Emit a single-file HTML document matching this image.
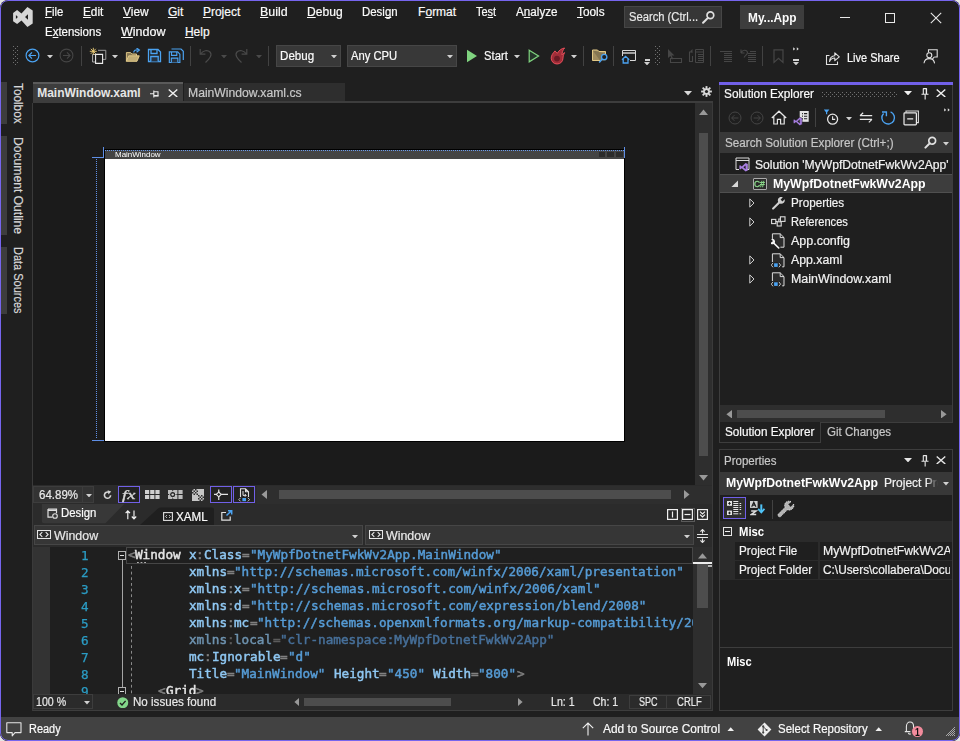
<!DOCTYPE html>
<html><head><meta charset="utf-8"><title>MyWpfDotnetFwkWv2App</title>
<style>
html,body{margin:0;padding:0;}
body{width:960px;height:741px;background:#e6e6e6;overflow:hidden;position:relative;font-family:'Liberation Sans',sans-serif;}
#win{position:absolute;left:0;top:0;width:960px;height:741px;box-sizing:border-box;background:#1f1f1f;border-radius:8px;overflow:hidden;}
#frame{position:absolute;left:0;top:0;width:960px;height:741px;box-sizing:border-box;border:1px solid #7665ee;border-radius:8px;pointer-events:none;}
.a{position:absolute;display:block;}
.t{position:absolute;white-space:pre;transform-origin:0 50%;}
u{text-decoration:underline;text-decoration-skip-ink:none;text-underline-offset:0.6px;text-decoration-thickness:1px;}
</style></head><body>
<div id="win">
<span class="t" style="left:44.90px;top:4.10px;font-size:12px;line-height:16px;color:#fafafa;font-family:'Liberation Sans',sans-serif;-webkit-text-stroke:0.2px;transform:scaleX(0.9460);"><u>F</u>ile</span>
<span class="t" style="left:82.90px;top:4.10px;font-size:12px;line-height:16px;color:#fafafa;font-family:'Liberation Sans',sans-serif;-webkit-text-stroke:0.2px;transform:scaleX(0.9813);"><u>E</u>dit</span>
<span class="t" style="left:122.60px;top:4.10px;font-size:12px;line-height:16px;color:#fafafa;font-family:'Liberation Sans',sans-serif;-webkit-text-stroke:0.2px;transform:scaleX(0.9924);"><u>V</u>iew</span>
<span class="t" style="left:167.90px;top:4.10px;font-size:12px;line-height:16px;color:#fafafa;font-family:'Liberation Sans',sans-serif;-webkit-text-stroke:0.2px;"><u>G</u>it</span>
<span class="t" style="left:202.90px;top:4.10px;font-size:12px;line-height:16px;color:#fafafa;font-family:'Liberation Sans',sans-serif;-webkit-text-stroke:0.2px;"><u>P</u>roject</span>
<span class="t" style="left:259.60px;top:4.10px;font-size:12px;line-height:16px;color:#fafafa;font-family:'Liberation Sans',sans-serif;-webkit-text-stroke:0.2px;transform:scaleX(1.0342);"><u>B</u>uild</span>
<span class="t" style="left:306.60px;top:4.10px;font-size:12px;line-height:16px;color:#fafafa;font-family:'Liberation Sans',sans-serif;-webkit-text-stroke:0.2px;transform:scaleX(1.0064);"><u>D</u>ebug</span>
<span class="t" style="left:362.10px;top:4.10px;font-size:12px;line-height:16px;color:#fafafa;font-family:'Liberation Sans',sans-serif;-webkit-text-stroke:0.2px;transform:scaleX(0.9529);">Desi<u>g</u>n</span>
<span class="t" style="left:418.10px;top:4.10px;font-size:12px;line-height:16px;color:#fafafa;font-family:'Liberation Sans',sans-serif;-webkit-text-stroke:0.2px;">F<u>o</u>rmat</span>
<span class="t" style="left:476.10px;top:4.10px;font-size:12px;line-height:16px;color:#fafafa;font-family:'Liberation Sans',sans-serif;-webkit-text-stroke:0.2px;transform:scaleX(0.9130);">Te<u>s</u>t</span>
<span class="t" style="left:515.60px;top:4.10px;font-size:12px;line-height:16px;color:#fafafa;font-family:'Liberation Sans',sans-serif;-webkit-text-stroke:0.2px;transform:scaleX(0.9742);">A<u>n</u>alyze</span>
<span class="t" style="left:576.60px;top:4.10px;font-size:12px;line-height:16px;color:#fafafa;font-family:'Liberation Sans',sans-serif;-webkit-text-stroke:0.2px;transform:scaleX(0.9852);"><u>T</u>ools</span>
<span class="t" style="left:45.10px;top:23.80px;font-size:12px;line-height:16px;color:#fafafa;font-family:'Liberation Sans',sans-serif;-webkit-text-stroke:0.2px;transform:scaleX(0.9557);">E<u>x</u>tensions</span>
<span class="t" style="left:120.60px;top:23.80px;font-size:12px;line-height:16px;color:#fafafa;font-family:'Liberation Sans',sans-serif;-webkit-text-stroke:0.2px;transform:scaleX(1.0448);"><u>W</u>indow</span>
<span class="t" style="left:184.90px;top:23.80px;font-size:12px;line-height:16px;color:#fafafa;font-family:'Liberation Sans',sans-serif;-webkit-text-stroke:0.2px;"><u>H</u>elp</span>
<svg class="a" style="left:13px;top:6px;" width="21" height="22" viewBox="0 0 21 22"><path d="M0.1 6.9 L4.1 3.9 L8.5 7.4 L14.4 0.9 L19.7 4.5 V17.4 L14.4 21.1 L8.5 14.6 L4.1 18.1 L0.1 15.2 Z M2.9 9 V13 L4.9 11 Z M15 8.2 V13.8 L12 11 Z" fill="#d6d6d6" fill-rule="evenodd"/></svg>
<div class="a" style="left:624px;top:6px;width:98px;height:22px;background:#363636;border:1px solid #464646;box-sizing:border-box;"></div>
<span class="t" style="left:629.10px;top:9.10px;font-size:12px;line-height:16px;color:#e8e8e8;font-family:'Liberation Sans',sans-serif;-webkit-text-stroke:0.2px;transform:scaleX(0.9336);">Search (Ctrl...</span>
<svg class="a" style="left:700.5px;top:9.5px;" width="15" height="15" viewBox="0 0 16 16"><circle cx="10" cy="5.6" r="3.6" fill="none" stroke="#e0e0e0" stroke-width="1.8"/><path d="M7.4 8.4 L2.2 13.6" stroke="#e0e0e0" stroke-width="2.2" stroke-linecap="round"/></svg>
<div class="a" style="left:740px;top:5px;width:64px;height:24px;background:#3d3d3d;"></div>
<span class="t" style="left:747.60px;top:9.80px;font-size:12px;line-height:16px;color:#fafafa;font-family:'Liberation Sans',sans-serif;font-weight:bold;transform:scaleX(0.9896);">My...App</span>
<div class="a" style="left:839.5px;top:17px;width:10.5px;height:1px;background:#e8e8e8;"></div>
<div class="a" style="left:885px;top:13px;width:10px;height:10px;border:1px solid #e8e8e8;box-sizing:border-box;"></div>
<svg class="a" style="left:930px;top:12px;" width="12" height="12" viewBox="0 0 12 12"><path d="M0.8 0.8 L11.2 11.2 M11.2 0.8 L0.8 11.2" stroke="#e8e8e8" stroke-width="1.1"/></svg>
<div class="a" style="left:13px;top:46px;width:5px;height:19px;background-image:radial-gradient(circle at 0.5px 0.5px,#707070 0.6px,transparent 0.75px),radial-gradient(circle at 0.5px 0.5px,#707070 0.6px,transparent 0.75px);background-size:4px 4px;background-position:0 0,2px 2px;"></div>
<div class="a" style="left:655px;top:46px;width:5px;height:19px;background-image:radial-gradient(circle at 0.5px 0.5px,#707070 0.6px,transparent 0.75px),radial-gradient(circle at 0.5px 0.5px,#707070 0.6px,transparent 0.75px);background-size:4px 4px;background-position:0 0,2px 2px;"></div>
<div class="a" style="left:81px;top:46px;width:1px;height:20px;background:#424242;"></div>
<div class="a" style="left:190px;top:46px;width:1px;height:20px;background:#424242;"></div>
<div class="a" style="left:268px;top:46px;width:1px;height:20px;background:#424242;"></div>
<div class="a" style="left:583px;top:46px;width:1px;height:20px;background:#424242;"></div>
<div class="a" style="left:613px;top:46px;width:1px;height:20px;background:#424242;"></div>
<div class="a" style="left:710px;top:46px;width:1px;height:20px;background:#424242;"></div>
<div class="a" style="left:762px;top:46px;width:1px;height:20px;background:#424242;"></div>
<svg class="a" style="left:25px;top:48px;" width="15" height="15" viewBox="0 0 15 15"><circle cx="7.5" cy="7.5" r="6.4" fill="none" stroke="#4ba3f2" stroke-width="1.2"/><path d="M11 7.5 H4.2 M7 4.4 L3.9 7.5 L7 10.6" fill="none" stroke="#4ba3f2" stroke-width="1.2"/></svg>
<svg class="a" style="left:47.2px;top:54.5px;" width="6" height="3.5" viewBox="0 0 6 3.5"><path d="M0 0 H6 L3 3.4 Z" fill="#d0d0d0"/></svg>
<svg class="a" style="left:59px;top:48px;" width="15" height="15" viewBox="0 0 15 15"><circle cx="7.5" cy="7.5" r="6.4" fill="none" stroke="#454545" stroke-width="1.1"/><path d="M4 7.5 H10.8 M8 4.4 L11.1 7.5 L8 10.6" fill="none" stroke="#454545" stroke-width="1.1"/></svg>
<svg class="a" style="left:89px;top:47px;" width="18" height="17" viewBox="0 0 18 17"><path d="M9 3.3 H16.8 V12.4 H14" fill="none" stroke="#9c9c9c" stroke-width="1"/><path d="M6.5 7.5 H3.6 V15 H6.5" fill="none" stroke="#b0b0b0" stroke-width="1"/><path d="M6.6 7.4 H13.6 V16.4 H6.6 Z" fill="#1f1f1f" stroke="#ececec" stroke-width="1.1"/><path d="M4.3 0.8 V7.8 M0.8 4.3 H7.8 M1.8 1.8 L6.8 6.8 M6.8 1.8 L1.8 6.8" stroke="#f2d27a" stroke-width="0.9"/></svg>
<svg class="a" style="left:112px;top:54.5px;" width="6" height="3.5" viewBox="0 0 6 3.5"><path d="M0 0 H6 L3 3.4 Z" fill="#d0d0d0"/></svg>
<svg class="a" style="left:124.5px;top:48px;" width="16" height="16" viewBox="0 0 16 16"><g transform="scale(0.92)"><path d="M1.5 5 H6 L7.5 6.5 H12.5 V8.5 H4 L1.5 14.5 Z" fill="#d9bd7c" opacity="0.55"/><path d="M1.5 14.5 V5 H6 L7.5 6.5 H12.5 V8.5" fill="none" stroke="#e8cf8c" stroke-width="1"/><path d="M1.5 14.5 L4 8.5 H15.5 L13 14.5 Z" fill="#e8cf8c" fill-opacity="0.8" stroke="#e8cf8c" stroke-width="1"/><path d="M9.5 5 C9.5 2.5 11.5 1.8 14 2" fill="none" stroke="#4ba3f2" stroke-width="1.3"/><path d="M12.5 0 L15.6 2.1 L12.6 4.6" fill="none" stroke="#4ba3f2" stroke-width="1.3"/></g></svg>
<svg class="a" style="left:146.6px;top:48.2px;" width="15" height="15" viewBox="0 0 15 15"><path d="M1.5 1.5 H11 L13.5 4 V13.5 H1.5 Z" fill="none" stroke="#4ba3f2" stroke-width="1.3"/><path d="M4 1.5 V5.5 H10 V1.5" fill="none" stroke="#4ba3f2" stroke-width="1.3"/><path d="M3.8 13.5 V8.5 H11.2 V13.5" fill="#27323f" stroke="#4ba3f2" stroke-width="1.3"/></svg>
<svg class="a" style="left:168px;top:48px;" width="16" height="16" viewBox="0 0 16 16"><path d="M3.5 1 H13 L15.3 3.3 V12" fill="none" stroke="#4ba3f2" stroke-width="1.2"/><g transform="translate(0,2.6) scale(0.88)"><path d="M1.5 1.5 H11 L13.5 4 V13.5 H1.5 Z" fill="none" stroke="#4ba3f2" stroke-width="1.3"/><path d="M4 1.5 V5.5 H10 V1.5" fill="none" stroke="#4ba3f2" stroke-width="1.3"/><path d="M3.8 13.5 V8.5 H11.2 V13.5" fill="#27323f" stroke="#4ba3f2" stroke-width="1.3"/></g></svg>
<svg class="a" style="left:199px;top:48px;" width="14" height="15" viewBox="0 0 14 15"><path d="M1.2 1 V6.2 H6.4" fill="none" stroke="#4a4a4a" stroke-width="1.2"/><path d="M1.6 6 C4 2.5 8.5 1.5 11 4 C13.5 6.8 11 10.5 6.5 14.5" fill="none" stroke="#4a4a4a" stroke-width="1.2"/></svg>
<svg class="a" style="left:221px;top:54.5px;" width="6" height="3.5" viewBox="0 0 6 3.5"><path d="M0 0 H6 L3 3.4 Z" fill="#4a4a4a"/></svg>
<svg class="a" style="left:234px;top:48px;" width="14" height="15" viewBox="0 0 14 15"><g transform="translate(14,0) scale(-1,1)"><path d="M1.2 1 V6.2 H6.4" fill="none" stroke="#4a4a4a" stroke-width="1.2"/><path d="M1.6 6 C4 2.5 8.5 1.5 11 4 C13.5 6.8 11 10.5 6.5 14.5" fill="none" stroke="#4a4a4a" stroke-width="1.2"/></g></svg>
<svg class="a" style="left:256px;top:54.5px;" width="6" height="3.5" viewBox="0 0 6 3.5"><path d="M0 0 H6 L3 3.4 Z" fill="#4a4a4a"/></svg>
<div class="a" style="left:276px;top:45px;width:65px;height:22px;background:#383838;border:1px solid #464646;box-sizing:border-box;"></div>
<span class="t" style="left:280.20px;top:48.30px;font-size:12px;line-height:16px;color:#fafafa;font-family:'Liberation Sans',sans-serif;-webkit-text-stroke:0.2px;transform:scaleX(0.9668);">Debug</span>
<svg class="a" style="left:331px;top:54.5px;" width="6" height="3.5" viewBox="0 0 6 3.5"><path d="M0 0 H6 L3 3.4 Z" fill="#d0d0d0"/></svg>
<div class="a" style="left:347px;top:45px;width:110px;height:22px;background:#383838;border:1px solid #464646;box-sizing:border-box;"></div>
<span class="t" style="left:351.20px;top:48.30px;font-size:12px;line-height:16px;color:#fafafa;font-family:'Liberation Sans',sans-serif;-webkit-text-stroke:0.2px;transform:scaleX(0.9360);">Any CPU</span>
<svg class="a" style="left:447.3px;top:54.5px;" width="6" height="3.5" viewBox="0 0 6 3.5"><path d="M0 0 H6 L3 3.4 Z" fill="#d0d0d0"/></svg>
<svg class="a" style="left:466px;top:49px;" width="12" height="14" viewBox="0 0 12 14"><path d="M1 0.8 L11 7 L1 13.2 Z" fill="#7fd37f"/></svg>
<span class="t" style="left:483.90px;top:48.30px;font-size:12px;line-height:16px;color:#fafafa;font-family:'Liberation Sans',sans-serif;-webkit-text-stroke:0.2px;transform:scaleX(0.9391);">Start</span>
<svg class="a" style="left:514px;top:54.5px;" width="6" height="3.5" viewBox="0 0 6 3.5"><path d="M0 0 H6 L3 3.4 Z" fill="#d0d0d0"/></svg>
<svg class="a" style="left:528px;top:49px;" width="12" height="14" viewBox="0 0 12 14"><path d="M1.2 1.2 L10.6 7 L1.2 12.8 Z" fill="#25352a" stroke="#7fd37f" stroke-width="1.2"/></svg>
<svg class="a" style="left:550px;top:47px;" width="16" height="18" viewBox="0 0 16 18"><path d="M5 3.9 C3 6 1.2 8.4 1.2 11.2 C1.2 14.5 3.8 17 7.1 17 C10.4 17 13 14.5 13 11.2 C13 9.6 13.4 8 14.6 5.6 C13.6 6.2 12.8 6.8 12 7.8 C12 5.5 12.8 3 14.6 1 C11.6 1.4 8.8 3.4 7.4 6.2 C6.6 5.6 5.6 4.8 5 3.9 Z" fill="#a12d38" stroke="#f0525f" stroke-width="0.9" stroke-linejoin="round"/><circle cx="7" cy="11.6" r="2.9" fill="#6a1a24"/></svg>
<svg class="a" style="left:571px;top:54.5px;" width="6" height="3.5" viewBox="0 0 6 3.5"><path d="M0 0 H6 L3 3.4 Z" fill="#d0d0d0"/></svg>
<svg class="a" style="left:591px;top:48px;" width="18" height="16" viewBox="0 0 18 16"><path d="M1.5 2 H6.5 L8 3.5 H14.5 V6 M9 12.5 H1.5 V2" fill="#a8925f" fill-opacity="0.45" stroke="#e8cf8c" stroke-width="1"/><path d="M1.5 12.5 V2 H6.5 L8 3.5 H14.5 V12.5 Z" fill="#d9bd7c" fill-opacity="0.55"/><circle cx="13.2" cy="9" r="2.7" fill="#1f1f1f" stroke="#4ba3f2" stroke-width="1.3"/><path d="M11.2 11 L8.2 14.4" stroke="#4ba3f2" stroke-width="1.5"/></svg>
<svg class="a" style="left:621px;top:49px;" width="16" height="15" viewBox="0 0 16 15"><path d="M9 11.5 H14.5 V1.5 H1.5 V7" fill="none" stroke="#d8d8d8" stroke-width="1"/><path d="M1.5 4 H14.5" stroke="#d8d8d8" stroke-width="1.4"/><path d="M1 10.8 L4.6 7.4 L8.2 10.8 M2.2 10 V14 H7 V10" fill="none" stroke="#4ba3f2" stroke-width="1.3"/></svg>
<div class="a" style="left:644.5px;top:59.3px;width:5.5px;height:1.3px;background:#d0d0d0;"></div>
<svg class="a" style="left:644.3px;top:61.5px;" width="6" height="3.5" viewBox="0 0 6 3.5"><path d="M0 0 H6 L3 3.4 Z" fill="#d0d0d0"/></svg>
<svg class="a" style="left:666px;top:48px;" width="17" height="16" viewBox="0 0 17 16"><path d="M2 1 L2 10 L4.4 8 L6 11.4 L7.2 10.8 L5.6 7.6 L8.4 7.4 Z" fill="#464646"/><path d="M4.5 10.5 H15.5 V14.5 H4.5 Z" fill="none" stroke="#464646" stroke-width="1.1"/></svg>
<svg class="a" style="left:688px;top:48px;" width="17" height="16" viewBox="0 0 17 16"><path d="M4.5 8 V13.5 H1.5 V4 H4" fill="none" stroke="#464646" stroke-width="1.1"/><path d="M2.2 3.2 L4.5 1 V5.2 Z" fill="#464646"/><path d="M7.5 1.5 H15.5 V14.5 H7.5 Z M7.5 4 H15.5 M10 6.5 H15 M10 8.5 H15 M10 10.5 H15 M10 12.5 H15" fill="none" stroke="#464646" stroke-width="1"/></svg>
<svg class="a" style="left:719px;top:50px;" width="15" height="13" viewBox="0 0 15 13"><path d="M1 1.5 H13 M5 3.5 H13 M5 5.5 H13 M5 7.5 H13 M5 9.5 H13 M5 11.5 H13" stroke="#464646" stroke-width="1" shape-rendering="crispEdges"/></svg>
<svg class="a" style="left:740px;top:48px;" width="17" height="15" viewBox="0 0 17 15"><path d="M1 5 V1.5 M1 5 H4.5 M1.2 4.8 C2.5 1.5 7 1.5 7.5 4.5 C7.7 6.5 5 7.5 4 9.5" fill="none" stroke="#464646" stroke-width="1.1"/><path d="M10 3.5 H16 M8 5.5 H16 M8 7.5 H16 M8 9.5 H16 M8 11.5 H16 M8 13.5 H16" stroke="#464646" stroke-width="1" shape-rendering="crispEdges"/></svg>
<svg class="a" style="left:772.5px;top:49px;" width="11" height="15" viewBox="0 0 11 15"><path d="M1 0.8 H10 V13.4 L5.5 9.2 L1 13.4 Z" fill="none" stroke="#464646" stroke-width="1.2"/></svg>
<svg class="a" style="left:793px;top:47.3px;" width="7" height="4" viewBox="0 0 7 4"><path d="M0.2 0.2 L2.2 1.9 L0.2 3.6 Z M3.8 0.2 L5.8 1.9 L3.8 3.6 Z" fill="#e0e0e0"/></svg>
<div class="a" style="left:793.3px;top:59.3px;width:5.5px;height:1.3px;background:#d0d0d0;"></div>
<svg class="a" style="left:793px;top:61.5px;" width="6" height="3.5" viewBox="0 0 6 3.5"><path d="M0 0 H6 L3 3.4 Z" fill="#d0d0d0"/></svg>
<svg class="a" style="left:825.2px;top:51.2px;" width="15" height="15" viewBox="0 0 15 15"><path d="M4.5 4.5 H1.5 V13.5 H12.5 V10.5" fill="none" stroke="#e0e0e0" stroke-width="1.1"/><path d="M4.5 10.5 C4.8 6.8 7 4.8 9.8 4.7 V1.8 L14.3 5.8 L9.8 9.6 V7 C7.6 6.9 5.8 8 4.5 10.5 Z" fill="none" stroke="#e0e0e0" stroke-width="1.1" stroke-linejoin="round"/></svg>
<span class="t" style="left:846.60px;top:50.10px;font-size:12px;line-height:16px;color:#fafafa;font-family:'Liberation Sans',sans-serif;-webkit-text-stroke:0.2px;transform:scaleX(0.9168);">Live Share</span>
<svg class="a" style="left:923.3px;top:48.6px;" width="15" height="15" viewBox="0 0 15 15"><path d="M5.5 3.5 V0.8 H14.2 V8 H11.2" fill="none" stroke="#e0e0e0" stroke-width="1.1"/><circle cx="6.3" cy="6.3" r="2.5" fill="none" stroke="#e0e0e0" stroke-width="1.1"/><path d="M1 14.3 C1.5 10 4 9.6 6.3 9.6 C8.6 9.6 11 10 11.6 14.3 M11.2 8 L9.6 9.8" fill="none" stroke="#e0e0e0" stroke-width="1.1"/></svg>
<div class="a" style="left:1px;top:82px;width:5.5px;height:42px;background:#3d3d3d;"></div>
<div class="a" style="left:1px;top:136px;width:5.5px;height:98.5px;background:#3d3d3d;"></div>
<div class="a" style="left:1px;top:247px;width:5.5px;height:67px;background:#3d3d3d;"></div>
<span class="t" style="left:26.00px;top:82.50px;font-size:12.5px;line-height:16px;color:#d6d6d6;font-family:'Liberation Sans',sans-serif;-webkit-text-stroke:0.2px;transform-origin:0 0;transform:rotate(90deg) scaleX(0.9421);">Toolbox</span>
<span class="t" style="left:26.00px;top:136.50px;font-size:12.5px;line-height:16px;color:#d6d6d6;font-family:'Liberation Sans',sans-serif;-webkit-text-stroke:0.2px;transform-origin:0 0;transform:rotate(90deg) scaleX(0.9704);">Document Outline</span>
<span class="t" style="left:26.00px;top:247.00px;font-size:12.5px;line-height:16px;color:#d6d6d6;font-family:'Liberation Sans',sans-serif;-webkit-text-stroke:0.2px;transform-origin:0 0;transform:rotate(90deg) scaleX(0.8794);">Data Sources</span>
<div class="a" style="left:33px;top:101px;width:680px;height:2px;background:#3d3d3d;"></div>
<div class="a" style="left:33px;top:82px;width:150.2px;height:20px;background:#3d3d3d;"></div>
<div class="a" style="left:33px;top:82px;width:150.2px;height:2.1px;background:#5a5a5a;"></div>
<span class="t" style="left:37.20px;top:84.80px;font-size:12px;line-height:16px;color:#e6e6e6;font-family:'Liberation Sans',sans-serif;font-weight:bold;">MainWindow.xaml</span>
<svg class="a" style="left:150px;top:89.5px;" width="9" height="8" viewBox="0 0 9 8"><path d="M0 3.8 H3.4 M3.8 0.4 V7.5 M4 1.8 H8 V5.6 H4" fill="none" stroke="#ececec" stroke-width="1.1"/><path d="M4 5.2 H8.5 V6.5 H4 Z" fill="#ececec"/></svg>
<svg class="a" style="left:168px;top:88.7px;" width="10" height="8.6" viewBox="0 0 10 8.6"><path d="M0.7 0.5 L9.3 8.1 M9.3 0.5 L0.7 8.1" stroke="#f0f0f0" stroke-width="1.35"/></svg>
<div class="a" style="left:184px;top:83px;width:161px;height:18px;background:#2e2e2e;"></div>
<span class="t" style="left:188.10px;top:84.50px;font-size:12px;line-height:16px;color:#c8c8c8;font-family:'Liberation Sans',sans-serif;-webkit-text-stroke:0.2px;transform:scaleX(1.0140);">MainWindow.xaml.cs</span>
<svg class="a" style="left:684px;top:91px;" width="8" height="4.5" viewBox="0 0 8 4.5"><path d="M0 0 H8 L4 4.4 Z" fill="#d8d8d8"/></svg>
<svg class="a" style="left:700.5px;top:85.5px;" width="11" height="11" viewBox="0 0 11 11"><g transform="translate(5.5,5.5)"><g stroke="#d8d8d8" stroke-width="1.9"><path d="M0 -5.4 V5.4"/><path d="M0 -5.4 V5.4" transform="rotate(45)"/><path d="M0 -5.4 V5.4" transform="rotate(90)"/><path d="M0 -5.4 V5.4" transform="rotate(135)"/></g><circle r="3.3" fill="#d8d8d8"/><circle r="1.6" fill="#1f1f1f"/></g></svg>
<div class="a" style="left:33px;top:103px;width:662px;height:382.6px;background:#1b1b1b;"></div>
<div class="a" style="left:695px;top:103px;width:17px;height:401px;background:#2e2e2e;"></div>
<div class="a" style="left:32px;top:103px;width:1px;height:608px;background:#3a3a3a;"></div>
<svg class="a" style="left:699px;top:108.5px;" width="9" height="6" viewBox="0 0 9 6"><path d="M0 6 L4.5 0.5 L9 6 Z" fill="#999"/></svg>
<div class="a" style="left:699px;top:133px;width:9px;height:322.5px;background:#4d4d4d;"></div>
<svg class="a" style="left:699px;top:475px;" width="9" height="6" viewBox="0 0 9 6"><path d="M0 0 L4.5 5.5 L9 0 Z" fill="#999"/></svg>
<div class="a" style="left:104px;top:149px;width:521px;height:292.7px;background:#000;"></div>
<div class="a" style="left:105px;top:149.5px;width:519px;height:9.8px;background:#444;"></div>
<div class="a" style="left:105px;top:159.3px;width:519px;height:281.4px;background:#fff;"></div>
<div class="a" style="left:105px;top:150px;width:519px;height:1px;background-image:linear-gradient(90deg,#6b9cf0 50%,transparent 50%);background-size:2px 1px;"></div>
<div class="a" style="left:598.5px;top:151.5px;width:6.5px;height:5.7px;background:#2b2b2b;"></div>
<div class="a" style="left:607px;top:151.5px;width:6.5px;height:5.7px;background:#2b2b2b;"></div>
<div class="a" style="left:616px;top:151.5px;width:6.5px;height:5.7px;background:#2b2b2b;"></div>
<span class="t" style="left:114.90px;top:149.70px;font-size:7.5px;line-height:10px;color:#fff;font-family:'Liberation Sans',sans-serif;transform:scaleX(1.0620);-webkit-text-stroke:0;">MainWindow</span>
<div class="a" style="left:103px;top:147px;width:1px;height:11px;background:#5f8fe6;"></div>
<div class="a" style="left:92px;top:157px;width:12px;height:1px;background:#5f8fe6;"></div>
<div class="a" style="left:623.5px;top:147px;width:1px;height:11px;background:#5f8fe6;"></div>
<div class="a" style="left:92px;top:440px;width:12px;height:1px;background:#5f8fe6;"></div>
<div class="a" style="left:96px;top:159px;width:1px;height:280px;background-image:linear-gradient(180deg,#5f8fe6 50%,transparent 50%);background-size:1px 2px;"></div>
<div class="a" style="left:33px;top:485px;width:680px;height:19px;background:#2b2b2b;"></div>
<div class="a" style="left:33px;top:486px;width:61px;height:17px;background:#333;border:1px solid #3d3d3d;box-sizing:border-box;"></div>
<div class="a" style="left:82px;top:486px;width:1px;height:17px;background:#3d3d3d;"></div>
<span class="t" style="left:38.60px;top:487.30px;font-size:12px;line-height:16px;color:#e8e8e8;font-family:'Liberation Sans',sans-serif;-webkit-text-stroke:0.2px;transform:scaleX(0.9606);">64.89%</span>
<svg class="a" style="left:86px;top:493.5px;" width="6" height="3.5" viewBox="0 0 6 3.5"><path d="M0 0 H6 L3 3.4 Z" fill="#d0d0d0"/></svg>
<svg class="a" style="left:103px;top:490px;" width="10" height="10" viewBox="0 0 10 10"><path d="M7.6 5.2 A3.1 3.1 0 1 1 5.4 2.2" fill="none" stroke="#d4d4d4" stroke-width="1.6"/><path d="M4.6 0.2 L8.2 1.6 L5.4 4.4 Z" fill="#d4d4d4"/></svg>
<div class="a" style="left:118px;top:486px;width:22px;height:17px;background:#222;border:1px solid #7160e8;box-sizing:border-box;"></div>
<span class="t" style="left:122.20px;top:487.10px;font-size:12px;line-height:16px;color:#d8d8d8;font-family:'Liberation Serif',serif;font-style:italic;transform:scaleX(1.5452);-webkit-text-stroke:0.3px;">fx</span>
<svg class="a" style="left:144.5px;top:490px;" width="15.5" height="9.5" viewBox="0 0 15.5 9.5"><rect x="0.0" y="0" width="4.2" height="4" fill="#d0d0d0"/><rect x="5.2" y="0" width="4.2" height="4" fill="#d0d0d0"/><rect x="10.4" y="0" width="4.2" height="4" fill="#d0d0d0"/><rect x="0.0" y="5" width="4.2" height="4" fill="#d0d0d0"/><rect x="5.2" y="5" width="4.2" height="4" fill="#d0d0d0"/><rect x="10.4" y="5" width="4.2" height="4" fill="#d0d0d0"/></svg>
<svg class="a" style="left:168px;top:490px;" width="15" height="9.5" viewBox="0 0 15 9.5"><rect x="0.0" y="0" width="4.2" height="4" fill="#bdbdbd"/><rect x="5.2" y="0" width="4.2" height="4" fill="#bdbdbd"/><rect x="10.4" y="0" width="4.2" height="4" fill="#bdbdbd"/><rect x="0.0" y="5" width="4.2" height="4" fill="#bdbdbd"/><rect x="5.2" y="5" width="4.2" height="4" fill="#bdbdbd"/><rect x="10.4" y="5" width="4.2" height="4" fill="#bdbdbd"/><circle cx="4.7" cy="4.6" r="3.2" fill="#2b2b2b" stroke="#d0d0d0" stroke-width="1"/><circle cx="4.7" cy="4.6" r="1.2" fill="#d0d0d0"/></svg>
<svg class="a" style="left:192.2px;top:489px;" width="12" height="12" viewBox="0 0 12 12"><rect width="12" height="12" fill="#c6c6c6"/><rect x="0.0" y="0.0" width="1.5" height="1.5" fill="#303030"/><rect x="3.0" y="0.0" width="1.5" height="1.5" fill="#303030"/><rect x="1.5" y="1.5" width="1.5" height="1.5" fill="#303030"/><rect x="4.5" y="1.5" width="1.5" height="1.5" fill="#303030"/><rect x="0.0" y="3.0" width="1.5" height="1.5" fill="#303030"/><rect x="3.0" y="3.0" width="1.5" height="1.5" fill="#303030"/><rect x="1.5" y="4.5" width="1.5" height="1.5" fill="#303030"/><rect x="4.5" y="4.5" width="1.5" height="1.5" fill="#303030"/><rect x="6.0" y="6.0" width="1.5" height="1.5" fill="#303030"/><rect x="9.0" y="6.0" width="1.5" height="1.5" fill="#303030"/><rect x="7.5" y="7.5" width="1.5" height="1.5" fill="#303030"/><rect x="10.5" y="7.5" width="1.5" height="1.5" fill="#303030"/><rect x="6.0" y="9.0" width="1.5" height="1.5" fill="#303030"/><rect x="9.0" y="9.0" width="1.5" height="1.5" fill="#303030"/><rect x="7.5" y="10.5" width="1.5" height="1.5" fill="#303030"/><rect x="10.5" y="10.5" width="1.5" height="1.5" fill="#303030"/></svg>
<div class="a" style="left:210.2px;top:486px;width:21.8px;height:17px;background:#222;border:1px solid #7160e8;box-sizing:border-box;"></div>
<svg class="a" style="left:214px;top:489px;" width="14" height="11" viewBox="0 0 14 11"><path d="M0 5.4 H14 M4.75 0.4 V11" stroke="#e4e4e4" stroke-width="1.2"/><path d="M4.75 3 L7.2 5.4 L4.75 7.8 L2.3 5.4 Z" fill="#222" stroke="#e4e4e4" stroke-width="1.1"/></svg>
<div class="a" style="left:233px;top:486px;width:22px;height:17px;background:#222;border:1px solid #7160e8;box-sizing:border-box;"></div>
<svg class="a" style="left:238px;top:488px;" width="12" height="14" viewBox="0 0 12 14"><path d="M2.5 9 V0.8 H7.5 L10.5 3.8 V9 M7.5 0.8 V3.8 H10.5" fill="none" stroke="#e0e0e0" stroke-width="1.1"/><path d="M5 3 V7.4 H8 M6.8 6 L8.2 7.4 L6.8 8.8" fill="none" stroke="#e0e0e0" stroke-width="1"/><rect x="4.4" y="10" width="3.6" height="3.2" fill="#4ba3f2"/><path d="M2.6 9.8 L0.8 11.6 L2.6 13.4 M9.8 9.8 L11.6 11.6 L9.8 13.4" fill="none" stroke="#d0d0d0" stroke-width="0.9"/></svg>
<div class="a" style="left:257px;top:485.6px;width:455px;height:18.4px;background:#2e2e2e;"></div>
<svg class="a" style="left:260.5px;top:490px;" width="6" height="9" viewBox="0 0 6 9"><path d="M6 0 L0.5 4.5 L6 9 Z" fill="#999"/></svg>
<div class="a" style="left:279px;top:490px;width:391.5px;height:9px;background:#4d4d4d;"></div>
<svg class="a" style="left:683.6px;top:490px;" width="6" height="9" viewBox="0 0 6 9"><path d="M0 0 L5.5 4.5 L0 9 Z" fill="#999"/></svg>
<div class="a" style="left:33px;top:504px;width:680px;height:21px;background:#2b2b2b;"></div>
<svg class="a" style="left:40px;top:503.7px;" width="90" height="20" viewBox="0 0 90 20"><path d="M1.8 0 H84.2 L65.4 19.3 H4.3 Q1.8 19.3 1.8 16.8 Z" fill="#383838"/></svg>
<svg class="a" style="left:47px;top:507.5px;" width="11" height="11" viewBox="0 0 11 11"><path d="M1 1 H9.5 V5.2 M5.4 9.2 H1 V1" fill="none" stroke="#e0e0e0" stroke-width="1.2"/><path d="M1 2.2 H9.5" stroke="#e0e0e0" stroke-width="1.6"/><circle cx="8" cy="8" r="2.3" fill="none" stroke="#e0e0e0" stroke-width="1.1"/></svg>
<span class="t" style="left:61.40px;top:505.10px;font-size:12px;line-height:16px;color:#fafafa;font-family:'Liberation Sans',sans-serif;-webkit-text-stroke:0.2px;transform:scaleX(0.9476);">Design</span>
<svg class="a" style="left:124.5px;top:509.5px;" width="12" height="10" viewBox="0 0 12 10"><path d="M2.8 9.2 V1 M0.6 3.2 L2.8 0.9 L5 3.2 M9 0.5 V8.8 M6.8 6.5 L9 8.8 L11.2 6.5" fill="none" stroke="#f4f4f4" stroke-width="1.15"/></svg>
<svg class="a" style="left:140px;top:507px;" width="76" height="18" viewBox="0 0 76 18"><path d="M0 18 L18 1.5 Q19 0.5 21 0.5 H72 Q74 0.5 74 2.5 V18 Z" fill="#1f1f1f"/></svg>
<svg class="a" style="left:162.5px;top:511.5px;" width="10" height="9" viewBox="0 0 10 9"><rect x="0.6" y="0.6" width="8.8" height="7.8" fill="none" stroke="#e0e0e0" stroke-width="1.1"/><path d="M4 3 L2.6 4.5 L4 6 M6 3 L7.4 4.5 L6 6" fill="none" stroke="#e0e0e0" stroke-width="0.8"/></svg>
<span class="t" style="left:176.10px;top:508.90px;font-size:12px;line-height:16px;color:#fafafa;font-family:'Liberation Sans',sans-serif;-webkit-text-stroke:0.2px;transform:scaleX(0.9667);">XAML</span>
<svg class="a" style="left:221px;top:509.5px;" width="12" height="11" viewBox="0 0 12 11"><path d="M5 2.5 H0.8 V10.2 H9.2 V6.5" fill="none" stroke="#e0e0e0" stroke-width="1.2"/><path d="M5.5 5.5 L10.5 0.8 M7 0.7 H10.7 V4.4" fill="none" stroke="#4ba3f2" stroke-width="1.5"/></svg>
<svg class="a" style="left:667px;top:509px;" width="11" height="11" viewBox="0 0 11 11"><rect x="0.6" y="0.6" width="9.8" height="9.8" fill="none" stroke="#f0f0f0" stroke-width="1.2"/><path d="M5.5 2.5 V8.5" stroke="#f0f0f0" stroke-width="1.2"/></svg>
<div class="a" style="left:680.5px;top:507.5px;width:14px;height:14px;border:1px solid #5a5a5a;box-sizing:border-box;"></div>
<svg class="a" style="left:682px;top:509px;" width="11" height="11" viewBox="0 0 11 11"><rect x="0.6" y="0.6" width="9.8" height="9.8" fill="none" stroke="#f0f0f0" stroke-width="1.2"/><path d="M2.5 5.5 H8.5" stroke="#f0f0f0" stroke-width="1.2"/></svg>
<svg class="a" style="left:697px;top:509px;" width="11" height="11" viewBox="0 0 11 11"><rect x="0.6" y="0.6" width="9.8" height="9.8" fill="none" stroke="#f0f0f0" stroke-width="1.2"/><path d="M3 2.6 L5.5 5 L8 2.6 M3 5.6 L5.5 8 L8 5.6" fill="none" stroke="#f0f0f0" stroke-width="1.2"/></svg>
<div class="a" style="left:33px;top:525px;width:680px;height:22px;background:#2b2b2b;"></div>
<div class="a" style="left:34px;top:525.3px;width:328.5px;height:20.2px;background:#363636;border:1px solid #464646;box-sizing:border-box;"></div>
<div class="a" style="left:364.5px;top:525.3px;width:329.5px;height:20.2px;background:#363636;border:1px solid #464646;box-sizing:border-box;"></div>
<svg class="a" style="left:37px;top:529.5px;" width="14" height="9" viewBox="0 0 14 9"><rect x="0.5" y="0.5" width="13" height="8" fill="#2b2b2b" stroke="#e6e6e6" stroke-width="1.1"/><path d="M5.3 2.2 L2.9 4.5 L5.3 6.8 M8.7 2.2 L11.1 4.5 L8.7 6.8" fill="none" stroke="#e6e6e6" stroke-width="1.1"/></svg>
<svg class="a" style="left:368.5px;top:529.5px;" width="14" height="9" viewBox="0 0 14 9"><rect x="0.5" y="0.5" width="13" height="8" fill="#2b2b2b" stroke="#e6e6e6" stroke-width="1.1"/><path d="M5.3 2.2 L2.9 4.5 L5.3 6.8 M8.7 2.2 L11.1 4.5 L8.7 6.8" fill="none" stroke="#e6e6e6" stroke-width="1.1"/></svg>
<span class="t" style="left:54.10px;top:528.10px;font-size:12.5px;line-height:16px;color:#e8e8e8;font-family:'Liberation Sans',sans-serif;-webkit-text-stroke:0.2px;transform:scaleX(0.9917);">Window</span>
<span class="t" style="left:385.60px;top:528.10px;font-size:12.5px;line-height:16px;color:#e8e8e8;font-family:'Liberation Sans',sans-serif;-webkit-text-stroke:0.2px;transform:scaleX(0.9917);">Window</span>
<svg class="a" style="left:683.7px;top:534.5px;" width="6" height="3.5" viewBox="0 0 6 3.5"><path d="M0 0 H6 L3 3.4 Z" fill="#d0d0d0"/></svg>
<svg class="a" style="left:352.3px;top:534.5px;" width="6" height="3.5" viewBox="0 0 6 3.5"><path d="M0 0 H6 L3 3.4 Z" fill="#d0d0d0"/></svg>
<svg class="a" style="left:697px;top:528.5px;" width="11" height="14" viewBox="0 0 11 14"><path d="M0 5.5 H11 M0 8.5 H11" stroke="#e4e4e4" stroke-width="1"/><path d="M5.5 0.6 V4.4 M3.4 2.6 L5.5 0.5 L7.6 2.6 M5.5 9.6 V13.4 M3.4 11.4 L5.5 13.5 L7.6 11.4" fill="none" stroke="#e4e4e4" stroke-width="1.1"/></svg>
<div class="a" style="left:33px;top:547px;width:17px;height:147px;background:#333;"></div>
<div class="a" style="left:50px;top:547px;width:643px;height:147px;background:#1f1f1f;"></div>
<div class="a" style="left:126px;top:547.3px;width:567px;height:16.6px;border:1.9px solid #464646;box-sizing:border-box;"></div>
<div class="a" style="left:122px;top:560px;width:1px;height:134px;background:#a5a5a5;"></div>
<div class="a" style="left:131px;top:565.8px;width:1px;height:128px;background-image:linear-gradient(180deg,#8a8a8a 56%,transparent 56%);background-size:1px 5.667px;"></div>
<div class="a" style="left:117.5px;top:551px;width:8.5px;height:8.5px;background:#1f1f1f;border:1px solid #b0b0b0;box-sizing:border-box;"></div>
<div class="a" style="left:119.5px;top:554.7px;width:4.5px;height:1px;background:#e0e0e0;"></div>
<div class="a" style="left:117.5px;top:687px;width:8.5px;height:8.5px;background:#1f1f1f;border:1px solid #b0b0b0;box-sizing:border-box;"></div>
<div class="a" style="left:119.5px;top:690.7px;width:4.5px;height:1px;background:#e0e0e0;"></div>
<div class="a" style="left:136.6px;top:561.6px;width:10px;height:1.2px;background-image:linear-gradient(90deg,#b0b0b0 40%,transparent 40%);background-size:3.6px 1px;"></div>
<div class="a" style="left:50px;top:547px;width:643px;height:146.5px;overflow:hidden">
<span class="t" style="left:31.30px;top:1.00px;font-size:12.1px;line-height:17px;color:#2b9cc4;font-family:'DejaVu Sans Mono','Liberation Mono',monospace;transform:scaleX(1.0472);-webkit-text-stroke:0.25px currentColor;">1</span>
<span class="t" style="left:77.70px;top:0.20px;font-size:12.1px;line-height:17px;color:#808080;font-family:'DejaVu Sans Mono','Liberation Mono',monospace;transform:scaleX(1.0472);-webkit-text-stroke:0.45px currentColor;">&lt;</span>
<span class="t" style="left:85.32px;top:0.20px;font-size:12.1px;line-height:17px;color:#e4e4e4;font-family:'DejaVu Sans Mono','Liberation Mono',monospace;transform:scaleX(1.0472);-webkit-text-stroke:0.45px currentColor;">Window</span>
<span class="t" style="left:138.70px;top:0.20px;font-size:12.1px;line-height:17px;color:#8fc7f2;font-family:'DejaVu Sans Mono','Liberation Mono',monospace;transform:scaleX(1.0472);-webkit-text-stroke:0.45px currentColor;">x</span>
<span class="t" style="left:146.32px;top:0.20px;font-size:12.1px;line-height:17px;color:#808080;font-family:'DejaVu Sans Mono','Liberation Mono',monospace;transform:scaleX(1.0472);-webkit-text-stroke:0.45px currentColor;">:</span>
<span class="t" style="left:153.95px;top:0.20px;font-size:12.1px;line-height:17px;color:#8fc7f2;font-family:'DejaVu Sans Mono','Liberation Mono',monospace;transform:scaleX(1.0472);-webkit-text-stroke:0.45px currentColor;">Class</span>
<span class="t" style="left:192.07px;top:0.20px;font-size:12.1px;line-height:17px;color:#808080;font-family:'DejaVu Sans Mono','Liberation Mono',monospace;transform:scaleX(1.0472);-webkit-text-stroke:0.45px currentColor;">=</span>
<span class="t" style="left:199.70px;top:0.20px;font-size:12.1px;line-height:17px;color:#569cd6;font-family:'DejaVu Sans Mono','Liberation Mono',monospace;transform:scaleX(1.0472);-webkit-text-stroke:0.45px currentColor;">"MyWpfDotnetFwkWv2App.MainWindow"</span>
<span class="t" style="left:31.30px;top:18.00px;font-size:12.1px;line-height:17px;color:#2b9cc4;font-family:'DejaVu Sans Mono','Liberation Mono',monospace;transform:scaleX(1.0472);-webkit-text-stroke:0.25px currentColor;">2</span>
<span class="t" style="left:138.70px;top:17.20px;font-size:12.1px;line-height:17px;color:#8fc7f2;font-family:'DejaVu Sans Mono','Liberation Mono',monospace;transform:scaleX(1.0472);-webkit-text-stroke:0.45px currentColor;">xmlns</span>
<span class="t" style="left:176.82px;top:17.20px;font-size:12.1px;line-height:17px;color:#808080;font-family:'DejaVu Sans Mono','Liberation Mono',monospace;transform:scaleX(1.0472);-webkit-text-stroke:0.45px currentColor;">=</span>
<span class="t" style="left:184.45px;top:17.20px;font-size:12.1px;line-height:17px;color:#569cd6;font-family:'DejaVu Sans Mono','Liberation Mono',monospace;transform:scaleX(1.0472);-webkit-text-stroke:0.45px currentColor;">"http://schemas.microsoft.com/winfx/2006/xaml/presentation"</span>
<span class="t" style="left:31.30px;top:35.00px;font-size:12.1px;line-height:17px;color:#2b9cc4;font-family:'DejaVu Sans Mono','Liberation Mono',monospace;transform:scaleX(1.0472);-webkit-text-stroke:0.25px currentColor;">3</span>
<span class="t" style="left:138.70px;top:34.20px;font-size:12.1px;line-height:17px;color:#8fc7f2;font-family:'DejaVu Sans Mono','Liberation Mono',monospace;transform:scaleX(1.0472);-webkit-text-stroke:0.45px currentColor;">xmlns</span>
<span class="t" style="left:176.82px;top:34.20px;font-size:12.1px;line-height:17px;color:#808080;font-family:'DejaVu Sans Mono','Liberation Mono',monospace;transform:scaleX(1.0472);-webkit-text-stroke:0.45px currentColor;">:</span>
<span class="t" style="left:184.45px;top:34.20px;font-size:12.1px;line-height:17px;color:#8fc7f2;font-family:'DejaVu Sans Mono','Liberation Mono',monospace;transform:scaleX(1.0472);-webkit-text-stroke:0.45px currentColor;">x</span>
<span class="t" style="left:192.07px;top:34.20px;font-size:12.1px;line-height:17px;color:#808080;font-family:'DejaVu Sans Mono','Liberation Mono',monospace;transform:scaleX(1.0472);-webkit-text-stroke:0.45px currentColor;">=</span>
<span class="t" style="left:199.70px;top:34.20px;font-size:12.1px;line-height:17px;color:#569cd6;font-family:'DejaVu Sans Mono','Liberation Mono',monospace;transform:scaleX(1.0472);-webkit-text-stroke:0.45px currentColor;">"http://schemas.microsoft.com/winfx/2006/xaml"</span>
<span class="t" style="left:31.30px;top:52.00px;font-size:12.1px;line-height:17px;color:#2b9cc4;font-family:'DejaVu Sans Mono','Liberation Mono',monospace;transform:scaleX(1.0472);-webkit-text-stroke:0.25px currentColor;">4</span>
<span class="t" style="left:138.70px;top:51.20px;font-size:12.1px;line-height:17px;color:#8fc7f2;font-family:'DejaVu Sans Mono','Liberation Mono',monospace;transform:scaleX(1.0472);-webkit-text-stroke:0.45px currentColor;">xmlns</span>
<span class="t" style="left:176.82px;top:51.20px;font-size:12.1px;line-height:17px;color:#808080;font-family:'DejaVu Sans Mono','Liberation Mono',monospace;transform:scaleX(1.0472);-webkit-text-stroke:0.45px currentColor;">:</span>
<span class="t" style="left:184.45px;top:51.20px;font-size:12.1px;line-height:17px;color:#8fc7f2;font-family:'DejaVu Sans Mono','Liberation Mono',monospace;transform:scaleX(1.0472);-webkit-text-stroke:0.45px currentColor;">d</span>
<span class="t" style="left:192.07px;top:51.20px;font-size:12.1px;line-height:17px;color:#808080;font-family:'DejaVu Sans Mono','Liberation Mono',monospace;transform:scaleX(1.0472);-webkit-text-stroke:0.45px currentColor;">=</span>
<span class="t" style="left:199.70px;top:51.20px;font-size:12.1px;line-height:17px;color:#569cd6;font-family:'DejaVu Sans Mono','Liberation Mono',monospace;transform:scaleX(1.0472);-webkit-text-stroke:0.45px currentColor;">"http://schemas.microsoft.com/expression/blend/2008"</span>
<span class="t" style="left:31.30px;top:69.00px;font-size:12.1px;line-height:17px;color:#2b9cc4;font-family:'DejaVu Sans Mono','Liberation Mono',monospace;transform:scaleX(1.0472);-webkit-text-stroke:0.25px currentColor;">5</span>
<span class="t" style="left:138.70px;top:68.20px;font-size:12.1px;line-height:17px;color:#8fc7f2;font-family:'DejaVu Sans Mono','Liberation Mono',monospace;transform:scaleX(1.0472);-webkit-text-stroke:0.45px currentColor;">xmlns</span>
<span class="t" style="left:176.82px;top:68.20px;font-size:12.1px;line-height:17px;color:#808080;font-family:'DejaVu Sans Mono','Liberation Mono',monospace;transform:scaleX(1.0472);-webkit-text-stroke:0.45px currentColor;">:</span>
<span class="t" style="left:184.45px;top:68.20px;font-size:12.1px;line-height:17px;color:#8fc7f2;font-family:'DejaVu Sans Mono','Liberation Mono',monospace;transform:scaleX(1.0472);-webkit-text-stroke:0.45px currentColor;">mc</span>
<span class="t" style="left:199.70px;top:68.20px;font-size:12.1px;line-height:17px;color:#808080;font-family:'DejaVu Sans Mono','Liberation Mono',monospace;transform:scaleX(1.0472);-webkit-text-stroke:0.45px currentColor;">=</span>
<span class="t" style="left:207.32px;top:68.20px;font-size:12.1px;line-height:17px;color:#569cd6;font-family:'DejaVu Sans Mono','Liberation Mono',monospace;transform:scaleX(1.0472);-webkit-text-stroke:0.45px currentColor;">"http://schemas.openxmlformats.org/markup-compatibility/2006"</span>
<span class="t" style="left:31.30px;top:86.00px;font-size:12.1px;line-height:17px;color:#2b9cc4;font-family:'DejaVu Sans Mono','Liberation Mono',monospace;transform:scaleX(1.0472);-webkit-text-stroke:0.25px currentColor;">6</span>
<span class="t" style="left:138.70px;top:85.20px;font-size:12.1px;line-height:17px;color:#6e93b0;font-family:'DejaVu Sans Mono','Liberation Mono',monospace;transform:scaleX(1.0472);-webkit-text-stroke:0.45px currentColor;">xmlns</span>
<span class="t" style="left:176.82px;top:85.20px;font-size:12.1px;line-height:17px;color:#5c5c5c;font-family:'DejaVu Sans Mono','Liberation Mono',monospace;transform:scaleX(1.0472);-webkit-text-stroke:0.45px currentColor;">:</span>
<span class="t" style="left:184.45px;top:85.20px;font-size:12.1px;line-height:17px;color:#6e93b0;font-family:'DejaVu Sans Mono','Liberation Mono',monospace;transform:scaleX(1.0472);-webkit-text-stroke:0.45px currentColor;">local</span>
<span class="t" style="left:222.57px;top:85.20px;font-size:12.1px;line-height:17px;color:#5c5c5c;font-family:'DejaVu Sans Mono','Liberation Mono',monospace;transform:scaleX(1.0472);-webkit-text-stroke:0.45px currentColor;">=</span>
<span class="t" style="left:230.20px;top:85.20px;font-size:12.1px;line-height:17px;color:#47709a;font-family:'DejaVu Sans Mono','Liberation Mono',monospace;transform:scaleX(1.0472);-webkit-text-stroke:0.45px currentColor;">"clr-namespace:MyWpfDotnetFwkWv2App"</span>
<span class="t" style="left:31.30px;top:103.00px;font-size:12.1px;line-height:17px;color:#2b9cc4;font-family:'DejaVu Sans Mono','Liberation Mono',monospace;transform:scaleX(1.0472);-webkit-text-stroke:0.25px currentColor;">7</span>
<span class="t" style="left:138.70px;top:102.20px;font-size:12.1px;line-height:17px;color:#8fc7f2;font-family:'DejaVu Sans Mono','Liberation Mono',monospace;transform:scaleX(1.0472);-webkit-text-stroke:0.45px currentColor;">mc</span>
<span class="t" style="left:153.95px;top:102.20px;font-size:12.1px;line-height:17px;color:#808080;font-family:'DejaVu Sans Mono','Liberation Mono',monospace;transform:scaleX(1.0472);-webkit-text-stroke:0.45px currentColor;">:</span>
<span class="t" style="left:161.57px;top:102.20px;font-size:12.1px;line-height:17px;color:#8fc7f2;font-family:'DejaVu Sans Mono','Liberation Mono',monospace;transform:scaleX(1.0472);-webkit-text-stroke:0.45px currentColor;">Ignorable</span>
<span class="t" style="left:230.20px;top:102.20px;font-size:12.1px;line-height:17px;color:#808080;font-family:'DejaVu Sans Mono','Liberation Mono',monospace;transform:scaleX(1.0472);-webkit-text-stroke:0.45px currentColor;">=</span>
<span class="t" style="left:237.82px;top:102.20px;font-size:12.1px;line-height:17px;color:#569cd6;font-family:'DejaVu Sans Mono','Liberation Mono',monospace;transform:scaleX(1.0472);-webkit-text-stroke:0.45px currentColor;">"d"</span>
<span class="t" style="left:31.30px;top:120.00px;font-size:12.1px;line-height:17px;color:#2b9cc4;font-family:'DejaVu Sans Mono','Liberation Mono',monospace;transform:scaleX(1.0472);-webkit-text-stroke:0.25px currentColor;">8</span>
<span class="t" style="left:138.70px;top:119.20px;font-size:12.1px;line-height:17px;color:#8fc7f2;font-family:'DejaVu Sans Mono','Liberation Mono',monospace;transform:scaleX(1.0472);-webkit-text-stroke:0.45px currentColor;">Title</span>
<span class="t" style="left:176.82px;top:119.20px;font-size:12.1px;line-height:17px;color:#808080;font-family:'DejaVu Sans Mono','Liberation Mono',monospace;transform:scaleX(1.0472);-webkit-text-stroke:0.45px currentColor;">=</span>
<span class="t" style="left:184.45px;top:119.20px;font-size:12.1px;line-height:17px;color:#569cd6;font-family:'DejaVu Sans Mono','Liberation Mono',monospace;transform:scaleX(1.0472);-webkit-text-stroke:0.45px currentColor;">"MainWindow"</span>
<span class="t" style="left:283.57px;top:119.20px;font-size:12.1px;line-height:17px;color:#8fc7f2;font-family:'DejaVu Sans Mono','Liberation Mono',monospace;transform:scaleX(1.0472);-webkit-text-stroke:0.45px currentColor;">Height</span>
<span class="t" style="left:329.32px;top:119.20px;font-size:12.1px;line-height:17px;color:#808080;font-family:'DejaVu Sans Mono','Liberation Mono',monospace;transform:scaleX(1.0472);-webkit-text-stroke:0.45px currentColor;">=</span>
<span class="t" style="left:336.95px;top:119.20px;font-size:12.1px;line-height:17px;color:#569cd6;font-family:'DejaVu Sans Mono','Liberation Mono',monospace;transform:scaleX(1.0472);-webkit-text-stroke:0.45px currentColor;">"450"</span>
<span class="t" style="left:382.70px;top:119.20px;font-size:12.1px;line-height:17px;color:#8fc7f2;font-family:'DejaVu Sans Mono','Liberation Mono',monospace;transform:scaleX(1.0472);-webkit-text-stroke:0.45px currentColor;">Width</span>
<span class="t" style="left:420.82px;top:119.20px;font-size:12.1px;line-height:17px;color:#808080;font-family:'DejaVu Sans Mono','Liberation Mono',monospace;transform:scaleX(1.0472);-webkit-text-stroke:0.45px currentColor;">=</span>
<span class="t" style="left:428.45px;top:119.20px;font-size:12.1px;line-height:17px;color:#569cd6;font-family:'DejaVu Sans Mono','Liberation Mono',monospace;transform:scaleX(1.0472);-webkit-text-stroke:0.45px currentColor;">"800"</span>
<span class="t" style="left:466.58px;top:119.20px;font-size:12.1px;line-height:17px;color:#808080;font-family:'DejaVu Sans Mono','Liberation Mono',monospace;transform:scaleX(1.0472);-webkit-text-stroke:0.45px currentColor;">&gt;</span>
<span class="t" style="left:31.30px;top:137.00px;font-size:12.1px;line-height:17px;color:#2b9cc4;font-family:'DejaVu Sans Mono','Liberation Mono',monospace;transform:scaleX(1.0472);-webkit-text-stroke:0.25px currentColor;">9</span>
<span class="t" style="left:108.20px;top:136.20px;font-size:12.1px;line-height:17px;color:#808080;font-family:'DejaVu Sans Mono','Liberation Mono',monospace;transform:scaleX(1.0472);-webkit-text-stroke:0.45px currentColor;">&lt;</span>
<span class="t" style="left:115.82px;top:136.20px;font-size:12.1px;line-height:17px;color:#e4e4e4;font-family:'DejaVu Sans Mono','Liberation Mono',monospace;transform:scaleX(1.0472);-webkit-text-stroke:0.45px currentColor;">Grid</span>
<span class="t" style="left:146.32px;top:136.20px;font-size:12.1px;line-height:17px;color:#808080;font-family:'DejaVu Sans Mono','Liberation Mono',monospace;transform:scaleX(1.0472);-webkit-text-stroke:0.45px currentColor;">&gt;</span>
</div>
<div class="a" style="left:693px;top:547px;width:19px;height:147px;background:#2e2e2e;"></div>
<svg class="a" style="left:698px;top:553px;" width="9" height="5.5" viewBox="0 0 9 5.5"><path d="M0 5.5 L4.5 0.3 L9 5.5 Z" fill="#999"/></svg>
<div class="a" style="left:693px;top:562px;width:19px;height:2px;background:#ececec;"></div>
<div class="a" style="left:706px;top:565px;width:6px;height:1.8px;background:#b4b4b4;"></div>
<div class="a" style="left:697px;top:564px;width:10.5px;height:43.5px;background:#4d4d4d;"></div>
<svg class="a" style="left:698px;top:683px;" width="9" height="5.5" viewBox="0 0 9 5.5"><path d="M0 0 L4.5 5.2 L9 0 Z" fill="#999"/></svg>
<div class="a" style="left:33px;top:693.7px;width:680px;height:17px;background:#2b2b2b;"></div>
<div class="a" style="left:33px;top:693.7px;width:60px;height:15.8px;background:#2b2b2b;border:1px solid #3d3d3d;box-sizing:border-box;"></div>
<span class="t" style="left:35.60px;top:694.40px;font-size:12px;line-height:16px;color:#e8e8e8;font-family:'Liberation Sans',sans-serif;-webkit-text-stroke:0.2px;transform:scaleX(0.8845);">100 %</span>
<svg class="a" style="left:84px;top:701px;" width="6" height="3.5" viewBox="0 0 6 3.5"><path d="M0 0 H6 L3 3.4 Z" fill="#d0d0d0"/></svg>
<svg class="a" style="left:117px;top:696.5px;" width="11.5" height="11.5" viewBox="0 0 11.5 11.5"><circle cx="5.75" cy="5.75" r="5.5" fill="#83d68a"/><path d="M3 5.9 L5 7.9 L8.6 3.9" fill="none" stroke="#1f1f1f" stroke-width="1.4"/></svg>
<span class="t" style="left:133.10px;top:694.40px;font-size:12px;line-height:16px;color:#e8e8e8;font-family:'Liberation Sans',sans-serif;-webkit-text-stroke:0.2px;transform:scaleX(0.9656);">No issues found</span>
<svg class="a" style="left:294px;top:698px;" width="5" height="8" viewBox="0 0 5 8"><path d="M5 0 L0.4 4 L5 8 Z" fill="#999"/></svg>
<div class="a" style="left:304px;top:698px;width:146.5px;height:8px;background:#4d4d4d;"></div>
<svg class="a" style="left:518px;top:698px;" width="5" height="8" viewBox="0 0 5 8"><path d="M0 0 L4.6 4 L0 8 Z" fill="#999"/></svg>
<span class="t" style="left:551.10px;top:694.40px;font-size:12px;line-height:16px;color:#e8e8e8;font-family:'Liberation Sans',sans-serif;-webkit-text-stroke:0.2px;transform:scaleX(0.8838);">Ln: 1</span>
<span class="t" style="left:593.10px;top:694.40px;font-size:12px;line-height:16px;color:#e8e8e8;font-family:'Liberation Sans',sans-serif;-webkit-text-stroke:0.2px;transform:scaleX(0.8749);">Ch: 1</span>
<div class="a" style="left:628.5px;top:694.5px;width:38.2px;height:14.3px;border:1px solid #3d3d3d;box-sizing:border-box;"></div>
<div class="a" style="left:665.7px;top:694.5px;width:45.8px;height:14.3px;border:1px solid #3d3d3d;box-sizing:border-box;"></div>
<span class="t" style="left:638.60px;top:694.40px;font-size:12px;line-height:16px;color:#e8e8e8;font-family:'Liberation Sans',sans-serif;-webkit-text-stroke:0.2px;transform:scaleX(0.7534);">SPC</span>
<span class="t" style="left:677.30px;top:694.40px;font-size:12px;line-height:16px;color:#e8e8e8;font-family:'Liberation Sans',sans-serif;-webkit-text-stroke:0.2px;transform:scaleX(0.7944);">CRLF</span>
<div class="a" style="left:712px;top:103px;width:1px;height:608px;background:#3a3a3a;"></div>
<div class="a" style="left:33px;top:709.7px;width:680px;height:1.3px;background:#3d3d3d;"></div>
<div class="a" style="left:719px;top:82px;width:234px;height:341px;background:#1f1f1f;border:1px solid #3d3d3d;box-sizing:border-box;"></div>
<div class="a" style="left:719px;top:82px;width:233.5px;height:2.7px;background:#7160e8;"></div>
<span class="t" style="left:724.00px;top:86.10px;font-size:12px;line-height:16px;color:#fafafa;font-family:'Liberation Sans',sans-serif;-webkit-text-stroke:0.2px;transform:scaleX(0.9848);">Solution Explorer</span>
<div class="a" style="left:822px;top:91.5px;width:76px;height:5px;background-image:radial-gradient(circle at 0.5px 0.5px,#707070 0.6px,transparent 0.75px),radial-gradient(circle at 0.5px 0.5px,#707070 0.6px,transparent 0.75px);background-size:4px 4px;background-position:0 0,2px 2px;"></div>
<svg class="a" style="left:904px;top:90.6px;" width="8" height="4.5" viewBox="0 0 8 4.5"><path d="M0 0 H8 L4 4.4 Z" fill="#f0f0f0"/></svg>
<svg class="a" style="left:920.6px;top:87.8px;" width="8" height="12" viewBox="0 0 8 12"><path d="M2.2 0.6 H5.8 M2.3 0.6 V6 M0.5 6.3 H7.5" fill="none" stroke="#f0f0f0" stroke-width="1.1"/><path d="M4.7 0.6 H6.1 V6 H4.7 Z M3.6 6.4 H4.7 V11.6 H3.6 Z" fill="#f0f0f0"/></svg>
<svg class="a" style="left:935.9px;top:88.8px;" width="10" height="8.6" viewBox="0 0 10 8.6"><path d="M0.7 0.5 L9.3 8.1 M9.3 0.5 L0.7 8.1" stroke="#f0f0f0" stroke-width="1.35"/></svg>
<svg class="a" style="left:728px;top:111px;" width="14" height="14" viewBox="0 0 14 14"><circle cx="7" cy="7" r="6" fill="none" stroke="#444" stroke-width="1"/><path d="M10.4 7 H3.8 M6.4 4.2 L3.6 7 L6.4 9.8" fill="none" stroke="#444" stroke-width="1"/></svg>
<svg class="a" style="left:750px;top:111px;" width="14" height="14" viewBox="0 0 14 14"><circle cx="7" cy="7" r="6" fill="none" stroke="#444" stroke-width="1"/><path d="M3.6 7 H10.2 M7.6 4.2 L10.4 7 L7.6 9.8" fill="none" stroke="#444" stroke-width="1"/></svg>
<svg class="a" style="left:771px;top:110px;" width="16" height="15" viewBox="0 0 16 15"><path d="M0.8 8 L8 1.2 L15.2 8 M2.8 6.6 V14 H6.4 V9.4 H9.6 V14 H13.2 V6.6" fill="none" stroke="#e6e6e6" stroke-width="1.2"/></svg>
<svg class="a" style="left:792.5px;top:110px;" width="16" height="16" viewBox="0 0 16 16"><rect x="6.7" y="1" width="9" height="10.8" fill="#e4e4e4"/><path d="M9 3.6 H9.9 M9 6.2 H9.9 M9 8.8 H9.9" stroke="#222" stroke-width="1.2"/><path d="M11 3.6 H14.2 M11 6.2 H14.2 M11 8.8 H14.2" stroke="#222" stroke-width="1.1"/><path d="M6.6 7.2 L9.2 8.3 V14.5 L6.6 15.6 L3 12.3 L1.2 13.6 L0.3 13.1 V9.7 L1.2 9.2 L3 10.5 Z M6.7 9.8 L4.7 11.4 L6.7 13 Z" fill="#a67de0" stroke="#1f1f1f" stroke-width="0.5" fill-rule="evenodd"/></svg>
<div class="a" style="left:815px;top:108px;width:1px;height:19px;background:#424242;"></div>
<svg class="a" style="left:823px;top:109px;" width="17" height="16" viewBox="0 0 17 16"><path d="M0.8 0.6 H6.4 L4.2 3.2 V5.6 L3 5 V3.2 Z" fill="#4ba3f2"/><circle cx="9.6" cy="10.2" r="5" fill="none" stroke="#e4e4e4" stroke-width="1.3"/><path d="M9.6 7.2 V10.4 H12.2" fill="none" stroke="#e4e4e4" stroke-width="1.1"/></svg>
<svg class="a" style="left:846.3px;top:116.5px;" width="6" height="3.5" viewBox="0 0 6 3.5"><path d="M0 0 H6 L3 3.4 Z" fill="#d0d0d0"/></svg>
<svg class="a" style="left:859px;top:112px;" width="14" height="11" viewBox="0 0 14 11"><path d="M1 3.7 H13.2 M1 3.7 L4.2 0.8 M0.8 7.4 H13 M13 7.4 L9.8 10.4" fill="none" stroke="#e6e6e6" stroke-width="1.2"/></svg>
<svg class="a" style="left:880px;top:110px;" width="16" height="16" viewBox="0 0 16 16"><path d="M3.6 3.4 A6.3 6.3 0 1 0 10.6 1.9" fill="none" stroke="#4ba3f2" stroke-width="1.4"/><path d="M2 2 H6.4 V6.2" fill="none" stroke="#4ba3f2" stroke-width="1.4"/></svg>
<svg class="a" style="left:902.5px;top:109.5px;" width="17" height="16" viewBox="0 0 17 16"><path d="M3 2.6 V1 H15.4 V12.6 H13.6" fill="none" stroke="#dcdcdc" stroke-width="1.1"/><rect x="1" y="2.9" width="12.4" height="12" rx="0.8" fill="#2b2b2b" stroke="#ececec" stroke-width="1.2"/><path d="M4.2 8.9 H10.2" stroke="#ececec" stroke-width="1.2"/></svg>
<svg class="a" style="left:943.8px;top:108.3px;" width="7" height="4" viewBox="0 0 7 4"><path d="M0.2 0.2 L2.2 1.9 L0.2 3.6 Z M3.8 0.2 L5.8 1.9 L3.8 3.6 Z" fill="#e0e0e0"/></svg>
<div class="a" style="left:720px;top:132px;width:232px;height:21px;background:#383838;"></div>
<span class="t" style="left:725.10px;top:135.10px;font-size:12px;line-height:16px;color:#c6c6c6;font-family:'Liberation Sans',sans-serif;-webkit-text-stroke:0.2px;transform:scaleX(0.9741);">Search Solution Explorer (Ctrl+;)</span>
<svg class="a" style="left:924px;top:136px;" width="13" height="13" viewBox="0 0 13 13"><circle cx="8.2" cy="4.8" r="3.4" fill="none" stroke="#e0e0e0" stroke-width="1.7"/><path d="M5.8 7.2 L1.4 11.6" stroke="#e0e0e0" stroke-width="2" stroke-linecap="round"/></svg>
<svg class="a" style="left:942.6px;top:142px;" width="6" height="3.5" viewBox="0 0 6 3.5"><path d="M0 0 H6 L3 3.4 Z" fill="#d0d0d0"/></svg>
<div class="a" style="left:720px;top:174px;width:232px;height:19px;background:#3d3d3d;border:1px solid #505050;box-sizing:border-box;border-left:none;border-right:none;"></div>
<span class="t" style="left:755.10px;top:156.80px;font-size:12px;line-height:16px;color:#f2f2f2;font-family:'Liberation Sans',sans-serif;-webkit-text-stroke:0.2px;transform:scaleX(1.0119);">Solution 'MyWpfDotnetFwkWv2App'</span>
<span class="t" style="left:772.90px;top:175.90px;font-size:12px;line-height:16px;color:#fff;font-family:'Liberation Sans',sans-serif;font-weight:bold;transform:scaleX(1.0265);">MyWpfDotnetFwkWv2App</span>
<span class="t" style="left:790.90px;top:195.10px;font-size:12px;line-height:16px;color:#f2f2f2;font-family:'Liberation Sans',sans-serif;-webkit-text-stroke:0.2px;transform:scaleX(0.9725);">Properties</span>
<span class="t" style="left:790.90px;top:214.10px;font-size:12px;line-height:16px;color:#f2f2f2;font-family:'Liberation Sans',sans-serif;-webkit-text-stroke:0.2px;transform:scaleX(0.9271);">References</span>
<span class="t" style="left:790.90px;top:233.10px;font-size:12px;line-height:16px;color:#f2f2f2;font-family:'Liberation Sans',sans-serif;-webkit-text-stroke:0.2px;transform:scaleX(1.0402);">App.config</span>
<span class="t" style="left:790.90px;top:252.10px;font-size:12px;line-height:16px;color:#f2f2f2;font-family:'Liberation Sans',sans-serif;-webkit-text-stroke:0.2px;transform:scaleX(1.0234);">App.xaml</span>
<span class="t" style="left:790.90px;top:271.10px;font-size:12px;line-height:16px;color:#f2f2f2;font-family:'Liberation Sans',sans-serif;-webkit-text-stroke:0.2px;transform:scaleX(1.0372);">MainWindow.xaml</span>
<svg class="a" style="left:730.5px;top:180px;" width="7.5" height="7.5" viewBox="0 0 7.5 7.5"><path d="M7 0.4 V7 H0.4 Z" fill="#d8d8d8"/></svg>
<svg class="a" style="left:748.6px;top:198px;" width="6" height="10" viewBox="0 0 6 10"><path d="M0.8 0.9 L5 5 L0.8 9.1 Z" fill="none" stroke="#d0d0d0" stroke-width="1"/></svg>
<svg class="a" style="left:748.6px;top:217px;" width="6" height="10" viewBox="0 0 6 10"><path d="M0.8 0.9 L5 5 L0.8 9.1 Z" fill="none" stroke="#d0d0d0" stroke-width="1"/></svg>
<svg class="a" style="left:748.6px;top:255px;" width="6" height="10" viewBox="0 0 6 10"><path d="M0.8 0.9 L5 5 L0.8 9.1 Z" fill="none" stroke="#d0d0d0" stroke-width="1"/></svg>
<svg class="a" style="left:748.6px;top:274px;" width="6" height="10" viewBox="0 0 6 10"><path d="M0.8 0.9 L5 5 L0.8 9.1 Z" fill="none" stroke="#d0d0d0" stroke-width="1"/></svg>
<svg class="a" style="left:735px;top:157px;" width="15" height="15" viewBox="0 0 15 15"><path d="M4 12.5 H1 V1 H14 V12.5 H11.5 M1 3.5 H14" fill="none" stroke="#dcdcdc" stroke-width="1"/><path d="M10.6 6 L12.8 7 V13.6 L10.6 14.6 L6.8 11.2 L5.2 12.4 L4.4 12 V8.6 L5.2 8.2 L6.8 9.4 Z M10.6 8.4 L8.4 10.3 L10.6 12.2 Z" fill="#a87fe0" fill-rule="evenodd"/></svg>
<div class="a" style="left:752.7px;top:178px;width:14.4px;height:12px;background:#2a2a2a;border:1px solid #ababab;box-sizing:border-box;border-radius:1px;"></div>
<span class="t" style="left:754.40px;top:178.40px;font-size:9px;line-height:12px;color:#8cdc8c;font-family:'Liberation Sans',sans-serif;transform:scaleX(0.9379);-webkit-text-stroke:0.3px;">C#</span>
<svg class="a" style="left:770.5px;top:195.5px;" width="15" height="15" viewBox="0 0 15 15"><path d="M13.6 3.2 L11.4 5.4 L9.6 3.6 L11.8 1.4 C10 0.6 8 1.2 7.2 2.8 C6.6 4 6.8 5.2 7.2 6 L1.2 12 C0.6 12.8 1.6 14 2.6 13.4 L8.8 7.4 C10 8 11.6 7.8 12.8 6.8 C13.8 5.8 14 4.4 13.6 3.2 Z" fill="#d0d0d0"/></svg>
<svg class="a" style="left:771px;top:216px;" width="15" height="11" viewBox="0 0 15 11"><rect x="0.6" y="3.4" width="4.2" height="4.2" fill="none" stroke="#dcdcdc" stroke-width="1.1"/><rect x="9.4" y="0.8" width="4.6" height="4.6" fill="none" stroke="#dcdcdc" stroke-width="1.1"/><rect x="6.2" y="5.8" width="4" height="4.2" fill="none" stroke="#dcdcdc" stroke-width="1.1"/><path d="M4.8 5.5 H6.6 M7.8 5.8 V3 H9.4" fill="none" stroke="#dcdcdc" stroke-width="1.1"/></svg>
<svg class="a" style="left:771px;top:233.4px;" width="15" height="16" viewBox="0 0 15 16"><path d="M1.4 6.5 V0.8 H9.2 L13 4.6 V14.2 H9.4 M9.2 0.8 V4.6 H13" fill="#2c2c2c" stroke="#dcdcdc" stroke-width="1"/><g transform="translate(9.4,5.2) scale(-0.78,0.78)"><path d="M13.6 3.2 L11.4 5.4 L9.6 3.6 L11.8 1.4 C10 0.6 8 1.2 7.2 2.8 C6.6 4 6.8 5.2 7.2 6 L1.2 12 C0.6 12.8 1.6 14 2.6 13.4 L8.8 7.4 C10 8 11.6 7.8 12.8 6.8 C13.8 5.8 14 4.4 13.6 3.2 Z" fill="#f4f4f4"/></g></svg>
<svg class="a" style="left:771px;top:253px;" width="14" height="16" viewBox="0 0 14 16"><path d="M1.4 9 V0.8 H9.2 L13 4.6 V13.8 H11.2 M9.2 0.8 V4.6 H13" fill="#2c2c2c" stroke="#dcdcdc" stroke-width="1"/><rect x="0" y="9.4" width="10" height="5.6" fill="#1f1f1f"/><rect x="3.1" y="10.3" width="3.6" height="3.6" fill="#4ba3f2"/><path d="M2 9.9 L0.3 12.1 L2 14.3 M7.9 9.9 L9.6 12.1 L7.9 14.3" fill="none" stroke="#d4d4d4" stroke-width="0.9"/></svg>
<svg class="a" style="left:771px;top:272px;" width="14" height="16" viewBox="0 0 14 16"><path d="M1.4 9 V0.8 H9.2 L13 4.6 V13.8 H11.2 M9.2 0.8 V4.6 H13" fill="#2c2c2c" stroke="#dcdcdc" stroke-width="1"/><rect x="0" y="9.4" width="10" height="5.6" fill="#1f1f1f"/><rect x="3.1" y="10.3" width="3.6" height="3.6" fill="#4ba3f2"/><path d="M2 9.9 L0.3 12.1 L2 14.3 M7.9 9.9 L9.6 12.1 L7.9 14.3" fill="none" stroke="#d4d4d4" stroke-width="0.9"/></svg>
<div class="a" style="left:720px;top:405px;width:232px;height:17px;background:#2e2e2e;"></div>
<svg class="a" style="left:725.7px;top:409.5px;" width="6" height="8.5" viewBox="0 0 6 8.5"><path d="M6 0 L0.4 4.25 L6 8.5 Z" fill="#999"/></svg>
<div class="a" style="left:737px;top:409.5px;width:148px;height:8.5px;background:#4d4d4d;"></div>
<svg class="a" style="left:941px;top:409.5px;" width="6" height="8.5" viewBox="0 0 6 8.5"><path d="M0 0 L5.6 4.25 L0 8.5 Z" fill="#999"/></svg>
<div class="a" style="left:719px;top:422px;width:102px;height:21px;background:#1f1f1f;border:1px solid #3d3d3d;box-sizing:border-box;border-top:none;"></div>
<span class="t" style="left:725.10px;top:423.80px;font-size:12px;line-height:16px;color:#fafafa;font-family:'Liberation Sans',sans-serif;-webkit-text-stroke:0.2px;transform:scaleX(0.9782);">Solution Explorer</span>
<span class="t" style="left:827.20px;top:423.80px;font-size:12px;line-height:16px;color:#c6c6c6;font-family:'Liberation Sans',sans-serif;-webkit-text-stroke:0.2px;transform:scaleX(0.9610);">Git Changes</span>
<div class="a" style="left:719px;top:449px;width:234px;height:262px;background:#1f1f1f;border:1px solid #3d3d3d;box-sizing:border-box;"></div>
<span class="t" style="left:724.20px;top:453.10px;font-size:12px;line-height:16px;color:#c8c8c8;font-family:'Liberation Sans',sans-serif;-webkit-text-stroke:0.2px;transform:scaleX(0.9579);">Properties</span>
<svg class="a" style="left:904px;top:457.6px;" width="8" height="4.5" viewBox="0 0 8 4.5"><path d="M0 0 H8 L4 4.4 Z" fill="#e6e6e6"/></svg>
<svg class="a" style="left:920.6px;top:454.8px;" width="8" height="12" viewBox="0 0 8 12"><path d="M2.2 0.6 H5.8 M2.3 0.6 V6 M0.5 6.3 H7.5" fill="none" stroke="#e6e6e6" stroke-width="1.1"/><path d="M4.7 0.6 H6.1 V6 H4.7 Z M3.6 6.4 H4.7 V11.6 H3.6 Z" fill="#e6e6e6"/></svg>
<svg class="a" style="left:935.9px;top:455.8px;" width="10" height="8.6" viewBox="0 0 10 8.6"><path d="M0.7 0.5 L9.3 8.1 M9.3 0.5 L0.7 8.1" stroke="#e6e6e6" stroke-width="1.35"/></svg>
<div class="a" style="left:720px;top:471.5px;width:231.5px;height:23px;background:#383838;"></div>
<span class="t" style="left:725.80px;top:474.80px;font-size:12px;line-height:16px;color:#fff;font-family:'Liberation Sans',sans-serif;font-weight:bold;transform:scaleX(1.0218);">MyWpfDotnetFwkWv2App</span>
<div class="a" style="left:880px;top:472px;width:58px;height:22px;overflow:hidden;-webkit-mask-image:linear-gradient(90deg,#000 80%,transparent 100%)">
<span class="t" style="left:4.10px;top:2.80px;font-size:12px;line-height:16px;color:#f2f2f2;font-family:'Liberation Sans',sans-serif;-webkit-text-stroke:0.2px;">Project Properties</span>
</div>
<svg class="a" style="left:943px;top:482px;" width="6" height="3.5" viewBox="0 0 6 3.5"><path d="M0 0 H6 L3 3.4 Z" fill="#d0d0d0"/></svg>
<div class="a" style="left:722.7px;top:497px;width:23.3px;height:22px;background:#2e2e2e;border:1px solid #7160e8;box-sizing:border-box;"></div>
<svg class="a" style="left:726.8px;top:501.2px;" width="15" height="14" viewBox="0 0 15 14"><rect x="0" y="0" width="5" height="4.8" fill="#e4e4e4"/><path d="M1.2 2.4 H3.8 M2.5 1.1 V3.7" stroke="#1f1f1f" stroke-width="1"/><rect x="0" y="9.6" width="5" height="4.8" fill="#e4e4e4"/><path d="M1.2 12.0 H3.8 M2.5 10.7 V13.3" stroke="#1f1f1f" stroke-width="1"/><path d="M6.3 0.5 H11.3" stroke="#e4e4e4" stroke-width="1"/><path d="M6.3 2.5 H11.3" stroke="#e4e4e4" stroke-width="1"/><path d="M12.6 2.5 H14.2" stroke="#e4e4e4" stroke-width="1"/><path d="M6.3 4.5 H11.3" stroke="#e4e4e4" stroke-width="1"/><path d="M12.6 4.5 H14.2" stroke="#e4e4e4" stroke-width="1"/><path d="M6.3 6.5 H11.3" stroke="#e4e4e4" stroke-width="1"/><path d="M12.6 6.5 H14.2" stroke="#e4e4e4" stroke-width="1"/><path d="M6.3 8.5 H11.3" stroke="#e4e4e4" stroke-width="1"/><path d="M12.6 8.5 H14.2" stroke="#e4e4e4" stroke-width="1"/><path d="M6.3 10.5 H11.3" stroke="#e4e4e4" stroke-width="1"/><path d="M6.3 12.8 H11.3" stroke="#e4e4e4" stroke-width="1"/><path d="M12.6 12.8 H14.2" stroke="#e4e4e4" stroke-width="1"/></svg>
<svg class="a" style="left:749.8px;top:500.8px;" width="15" height="15" viewBox="0 0 15 15"><rect x="0" y="0" width="7.6" height="6.9" fill="#cfcfcf"/><path d="M1.7 5.7 L3.8 1.2 L5.9 5.7 M2.6 4.2 H5" fill="none" stroke="#1f1f1f" stroke-width="1.2"/><path d="M1.2 10 H6 L1.2 13.6 H6.2" fill="none" stroke="#dcdcdc" stroke-width="1.5"/><path d="M11.3 3.4 V10.6" stroke="#4fc3f7" stroke-width="2"/><path d="M8.2 7.8 L11.3 11.4 L14.4 7.8" fill="none" stroke="#4fc3f7" stroke-width="1.8"/></svg>
<div class="a" style="left:772px;top:499.5px;width:1px;height:19px;background:#424242;"></div>
<svg class="a" style="left:777px;top:499.5px;" width="18" height="18" viewBox="0 0 18 18"><path d="M16.6 4.2 L13.6 7.2 L11 4.6 L14 1.6 C11.6 0.6 9 1.4 8 3.6 C7.4 5 7.6 6.4 8 7.4 L1.2 14.2 C0.2 15.6 2 17.6 3.6 16.6 L10.4 9.8 C12 10.4 14 10.2 15.4 8.8 C16.8 7.4 17.2 5.6 16.6 4.2 Z" fill="#b4b4b4" stroke="#f0f0f0" stroke-width="0.8" stroke-dasharray="1.2 0.8"/></svg>
<div class="a" style="left:720px;top:521px;width:232px;height:59px;background:#2b2b2b;"></div>
<div class="a" style="left:735.2px;top:542px;width:83.3px;height:17.6px;background:#1f1f1f;"></div>
<div class="a" style="left:819.7px;top:542px;width:132px;height:17.6px;background:#1f1f1f;"></div>
<div class="a" style="left:735.2px;top:561px;width:83.3px;height:17.6px;background:#1f1f1f;"></div>
<div class="a" style="left:819.7px;top:561px;width:132px;height:17.6px;background:#1f1f1f;"></div>
<div class="a" style="left:723px;top:527px;width:9px;height:9px;border:1px solid #e6e6e6;box-sizing:border-box;"></div>
<div class="a" style="left:725px;top:531px;width:5px;height:1px;background:#f0f0f0;"></div>
<span class="t" style="left:739.10px;top:524.10px;font-size:12px;line-height:16px;color:#fff;font-family:'Liberation Sans',sans-serif;font-weight:bold;transform:scaleX(0.9405);">Misc</span>
<span class="t" style="left:739.10px;top:542.80px;font-size:12px;line-height:16px;color:#f2f2f2;font-family:'Liberation Sans',sans-serif;-webkit-text-stroke:0.2px;transform:scaleX(0.9712);">Project File</span>
<span class="t" style="left:739.10px;top:561.80px;font-size:12px;line-height:16px;color:#f2f2f2;font-family:'Liberation Sans',sans-serif;-webkit-text-stroke:0.2px;transform:scaleX(0.9785);">Project Folder</span>
<div class="a" style="left:820px;top:541px;width:130px;height:38px;overflow:hidden">
<span class="t" style="left:3.30px;top:1.80px;font-size:12px;line-height:16px;color:#f2f2f2;font-family:'Liberation Sans',sans-serif;-webkit-text-stroke:0.2px;transform:scaleX(1.0154);">MyWpfDotnetFwkWv2App.csproj</span>
<span class="t" style="left:3.30px;top:20.80px;font-size:12px;line-height:16px;color:#f2f2f2;font-family:'Liberation Sans',sans-serif;-webkit-text-stroke:0.2px;transform:scaleX(0.9869);">C:\Users\collabera\Documents</span>
</div>
<div class="a" style="left:720px;top:647px;width:232px;height:1px;background:#3d3d3d;"></div>
<span class="t" style="left:726.60px;top:654.10px;font-size:12px;line-height:16px;color:#fff;font-family:'Liberation Sans',sans-serif;font-weight:bold;transform:scaleX(0.9218);">Misc</span>
<div class="a" style="left:0px;top:716.6px;width:960px;height:25px;background:#424242;"></div>
<svg class="a" style="left:5.5px;top:721.5px;" width="16" height="15" viewBox="0 0 16 15"><path d="M0.8 0.8 H15 V10.6 H9 L6.2 13.8 V10.6 H0.8 Z" fill="none" stroke="#e6e6e6" stroke-width="1.1" stroke-linejoin="round"/></svg>
<span class="t" style="left:29.40px;top:721.10px;font-size:12px;line-height:16px;color:#fafafa;font-family:'Liberation Sans',sans-serif;-webkit-text-stroke:0.2px;transform:scaleX(0.9110);">Ready</span>
<svg class="a" style="left:582px;top:722px;" width="12" height="13.5" viewBox="0 0 12 13.5"><path d="M6 13.5 V1.2 M0.8 6.2 L6 1 L11.2 6.2" fill="none" stroke="#f0f0f0" stroke-width="1.1"/></svg>
<span class="t" style="left:602.60px;top:721.10px;font-size:12px;line-height:16px;color:#fafafa;font-family:'Liberation Sans',sans-serif;-webkit-text-stroke:0.2px;transform:scaleX(0.9917);">Add to Source Control</span>
<svg class="a" style="left:726.5px;top:726.5px;" width="7.5" height="4.5" viewBox="0 0 7.5 4.5"><path d="M0 4.5 L3.75 0.3 L7.5 4.5 Z" fill="#f0f0f0"/></svg>
<svg class="a" style="left:757px;top:721.5px;" width="15" height="15" viewBox="0 0 15 15"><path d="M7.5 0.6 L14.4 7.5 L7.5 14.4 L0.6 7.5 Z" fill="#ededed"/><path d="M6.2 4 V10.6 M6.2 4.6 L9.6 8" stroke="#424242" stroke-width="1"/><circle cx="6.2" cy="4.4" r="1.1" fill="#424242"/><circle cx="6.2" cy="10.6" r="1.1" fill="#424242"/><circle cx="9.6" cy="8" r="1.1" fill="#424242"/></svg>
<span class="t" style="left:778.20px;top:721.10px;font-size:12px;line-height:16px;color:#fafafa;font-family:'Liberation Sans',sans-serif;-webkit-text-stroke:0.2px;transform:scaleX(0.9527);">Select Repository</span>
<svg class="a" style="left:874.5px;top:726.5px;" width="7.5" height="4.5" viewBox="0 0 7.5 4.5"><path d="M0 4.5 L3.75 0.3 L7.5 4.5 Z" fill="#f0f0f0"/></svg>
<svg class="a" style="left:904px;top:720.5px;" width="12" height="14" viewBox="0 0 12 14"><path d="M2.4 10.4 V5.6 C2.4 2.8 4 1 6 1 C8 1 9.6 2.8 9.6 5.6 V7 M0.8 10.6 H6.4 M4.4 12 C4.8 13.2 6 13.4 6.8 12.8" fill="none" stroke="#e6e6e6" stroke-width="1.1"/></svg>
<div class="a" style="left:912px;top:726px;width:11px;height:11px;background:#f28b9c;border-radius:5.5px;"></div>
<span class="t" style="left:914.80px;top:726.10px;font-size:10.5px;line-height:12px;color:#111;font-family:'Liberation Sans',sans-serif;font-weight:bold;transform:scaleX(0.8214);">1</span>
<svg class="a" style="left:946px;top:727px;" width="9" height="9" viewBox="0 0 9 9"><rect x="8" y="0" width="1" height="1" fill="#a8a8a8"/><rect x="7" y="1" width="1" height="1" fill="#a8a8a8"/><rect x="6" y="2" width="1" height="1" fill="#a8a8a8"/><rect x="8" y="2" width="1" height="1" fill="#a8a8a8"/><rect x="5" y="3" width="1" height="1" fill="#a8a8a8"/><rect x="7" y="3" width="1" height="1" fill="#a8a8a8"/><rect x="4" y="4" width="1" height="1" fill="#a8a8a8"/><rect x="6" y="4" width="1" height="1" fill="#a8a8a8"/><rect x="8" y="4" width="1" height="1" fill="#a8a8a8"/><rect x="3" y="5" width="1" height="1" fill="#a8a8a8"/><rect x="5" y="5" width="1" height="1" fill="#a8a8a8"/><rect x="7" y="5" width="1" height="1" fill="#a8a8a8"/><rect x="2" y="6" width="1" height="1" fill="#a8a8a8"/><rect x="4" y="6" width="1" height="1" fill="#a8a8a8"/><rect x="6" y="6" width="1" height="1" fill="#a8a8a8"/><rect x="8" y="6" width="1" height="1" fill="#a8a8a8"/><rect x="1" y="7" width="1" height="1" fill="#a8a8a8"/><rect x="3" y="7" width="1" height="1" fill="#a8a8a8"/><rect x="5" y="7" width="1" height="1" fill="#a8a8a8"/><rect x="7" y="7" width="1" height="1" fill="#a8a8a8"/><rect x="0" y="8" width="1" height="1" fill="#a8a8a8"/><rect x="2" y="8" width="1" height="1" fill="#a8a8a8"/><rect x="4" y="8" width="1" height="1" fill="#a8a8a8"/><rect x="6" y="8" width="1" height="1" fill="#a8a8a8"/><rect x="8" y="8" width="1" height="1" fill="#a8a8a8"/></svg>
<div id="frame"></div>
</div>
</body></html>
